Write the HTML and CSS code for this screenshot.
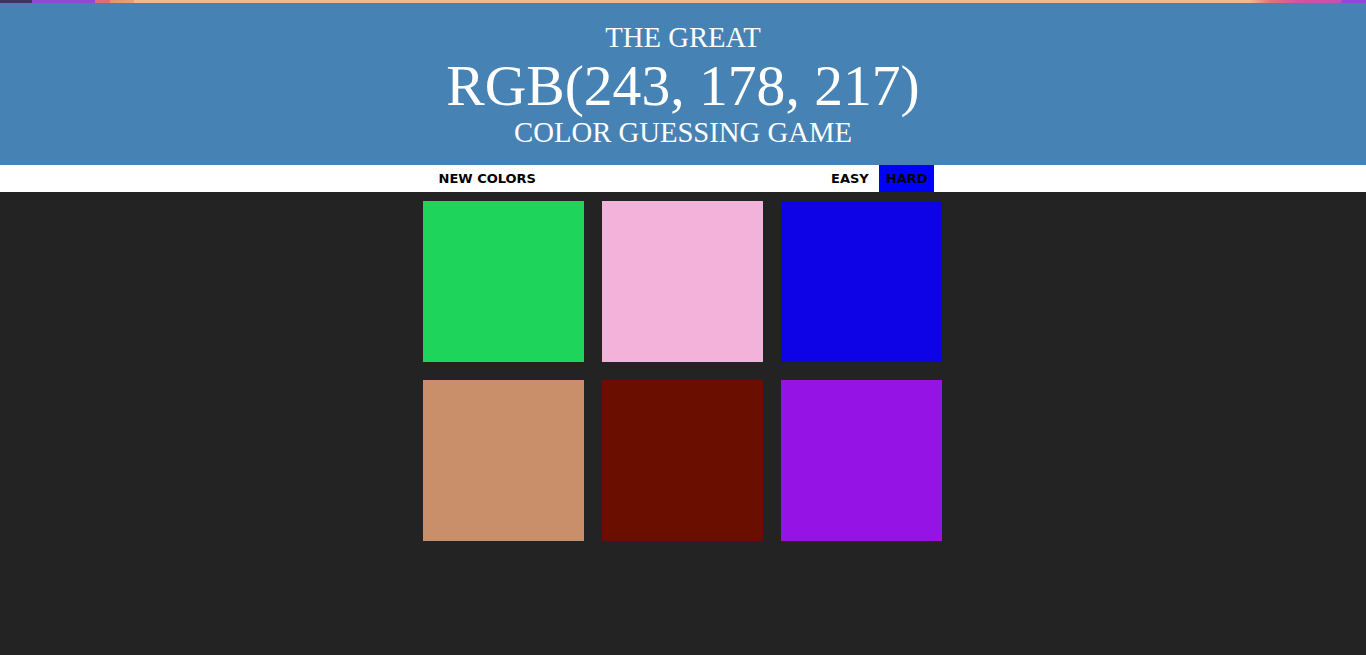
FILE: index.html
```html
<!DOCTYPE html>
<html>
<head>
<meta charset="utf-8">
<title>Color Game</title>
<link rel="stylesheet" href="styles.css">
</head>
<body>
<div class="topbar"></div>
<h1 class="title">The Great<br><span class="color-display">RGB(243, 178, 217)</span><br>Color Guessing Game</h1>
<div class="stripe">
  <div class="stripe-inner">
    <button class="btn">New Colors</button>
    <span class="message"></span>
    <div class="modes">
      <button class="btn mode">Easy</button>
      <button class="btn mode selected">Hard</button>
    </div>
  </div>
</div>
<div class="grid">
  <div class="square sq-green"></div>
  <div class="square sq-pink"></div>
  <div class="square sq-blue"></div>
  <div class="square sq-tan"></div>
  <div class="square sq-maroon"></div>
  <div class="square sq-purple"></div>
</div>
</body>
</html>
```
FILE: styles.css
```css
html, body {
  margin: 0;
  padding: 0;
}
body {
  background: #232323;
  font-family: "DejaVu Sans", Verdana, sans-serif;
}
.topbar {
  height: 3px;
  background: linear-gradient(to right,
    #3b3560 0, #3b3560 32px,
    #8a4bd8 32px, #8a4bd8 95px,
    #e06a80 95px, #e06a80 110px,
    #e8936a 110px, #e8a07a 134px,
    #f2b896 134px, #f2b896 1250px,
    #e47080 1270px, #d850a0 1300px, #c850b0 1340px,
    #8a48e0 1343px, #8a48e0 1366px);
}
.title {
  margin: 0;
  padding: 19px 0 17px;
  background: steelblue;
  color: #fff;
  text-align: center;
  text-transform: uppercase;
  font-family: "Liberation Serif", "Times New Roman", serif;
  font-weight: normal;
  font-size: 28.7px;
  line-height: 1.1;
}
.color-display {
  font-size: 57.6px;
}
.stripe {
  background: #fff;
  height: 27px;
}
.stripe-inner {
  width: 538px;
  margin: 0 auto;
  box-sizing: border-box;
  padding: 0 18px 0 18px;
  display: flex;
  justify-content: space-between;
  height: 27px;
}
.modes {
  display: flex;
  gap: 4px;
}
.btn {
  border: none;
  background: none;
  margin: 0;
  padding: 0 6.5px;
  height: 27px;
  font-family: "DejaVu Sans", Verdana, sans-serif;
  font-weight: bold;
  font-size: 13px;
  color: #000;
  text-transform: uppercase;
  cursor: pointer;
}
.selected {
  background: #0000ff;
}
.grid {
  width: 520px;
  margin: 9px auto 0;
  display: grid;
  grid-template-columns: repeat(3, 161px);
  grid-auto-rows: 161px;
  gap: 18px;
}
.sq-green { background: rgb(30, 212, 91); }
.sq-pink { background: rgb(243, 178, 217); }
.sq-blue { background: rgb(14, 3, 230); }
.sq-tan { background: rgb(201, 143, 106); }
.sq-maroon { background: rgb(106, 14, 0); }
.sq-purple { background: rgb(149, 19, 228); }
```
